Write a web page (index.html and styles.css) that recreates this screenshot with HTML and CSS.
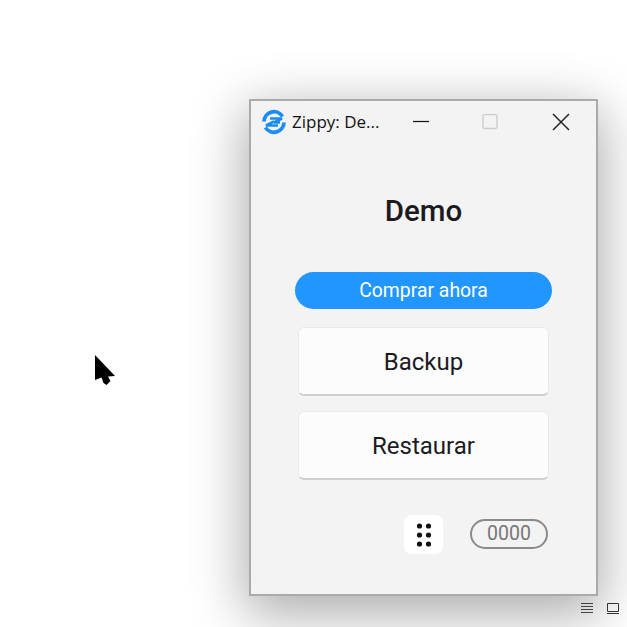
FILE: index.html
```html
<!DOCTYPE html>
<html lang="es">
<head>
<meta charset="utf-8">
<title>Zippy: Demo</title>
<link rel="stylesheet" href="styles.css">
</head>
<body>
<svg class="cursor" width="21" height="31" viewBox="0 0 21 31"><path d="M0 0L20 21L13 21.5L15.5 26L11.5 30L8.5 28L6.5 22.5L0 25Z" fill="#000"/></svg>
<main class="window">
  <header class="titlebar">
    <svg class="logo" width="26" height="26" viewBox="0 0 26 26">
      <path d="M3 12.5A10 10 0 0 1 21.5 7.5" fill="none" stroke="#1a8cf5" stroke-width="3.8"/>
      <path d="M23 13.5A10 10 0 0 1 4.5 18.5" fill="none" stroke="#1a8cf5" stroke-width="3.8"/>
      <path d="M9 9.5H21L13 13.5H19" fill="none" stroke="#1a8cf5" stroke-width="2.6"/>
      <path d="M17 16.5H5L13 12.5" fill="none" stroke="#1a8cf5" stroke-width="2.6"/>
    </svg>
    <span class="title">Zippy: De...</span>
    <div class="controls">
      <span class="ctl"><svg width="16" height="16" viewBox="0 0 16 16"><path d="M0 7.5H16" stroke="#111" stroke-width="1.2"/></svg></span>
      <span class="ctl ctl-max"><svg width="16" height="16" viewBox="0 0 16 16"><rect x="1" y="0.5" width="14" height="14" rx="2" fill="none" stroke="#cdcdcd" stroke-width="1.4"/></svg></span>
      <span class="ctl"><svg width="18" height="18" viewBox="0 0 18 18"><path d="M1 1L17 17M17 1L1 17" stroke="#222" stroke-width="1.5"/></svg></span>
    </div>
  </header>
  <section class="content">
    <h1 class="heading">Demo</h1>
    <button class="buy">Comprar ahora</button>
    <button class="action">Backup</button>
    <button class="action">Restaurar</button>
    <div class="footer">
      <span class="keypad">
        <svg width="16" height="26" viewBox="0 0 16 26" fill="#111"><circle cx="3.5" cy="4" r="2.6"/><circle cx="12.5" cy="4" r="2.6"/><circle cx="3.5" cy="13" r="2.6"/><circle cx="12.5" cy="13" r="2.6"/><circle cx="3.5" cy="22" r="2.6"/><circle cx="12.5" cy="22" r="2.6"/></svg>
      </span>
      <span class="code">0000</span>
    </div>
  </section>
</main>
<div class="tray">
  <svg width="14" height="12" viewBox="0 0 14 12"><path d="M1 1.5H13M1 4.5H13M1 7.5H13M1 10.5H13" stroke="#444" stroke-width="1"/></svg>
  <svg width="14" height="12" viewBox="0 0 14 12"><path d="M1.5 1.5H12.5V9.5H1.5Z" fill="none" stroke="#333" stroke-width="1"/><path d="M1 11.5H13" stroke="#333" stroke-width="1"/></svg>
</div>
</body>
</html>
```

FILE: styles.css
```css
* { box-sizing: border-box; }
html, body { margin: 0; height: 100%; }
body {
  position: relative;
  width: 627px;
  height: 627px;
  overflow: hidden;
  background: #fff;
  font-family: Roboto, sans-serif;
}
.cursor { position: absolute; left: 95px; top: 355px; }
.window {
  position: absolute;
  left: 249px;
  top: 99px;
  width: 349px;
  height: 497px;
  border: 2px solid #aaa;
  background: #f3f3f3;
  box-shadow: 0 14px 50px 4px rgba(0, 0, 0, 0.33);
  display: flex;
  flex-direction: column;
}
.titlebar {
  height: 41px;
  display: flex;
  align-items: center;
  padding-left: 10px;
  flex: none;
}
.logo { flex: none; }
.title {
  margin-left: 5px;
  margin-top: -1px;
  font-family: "Open Sans", sans-serif;
  font-size: 17px;
  color: #111;
  width: 100px;
  white-space: nowrap;
}
.controls {
  display: flex;
  margin-left: auto;
}
.ctl {
  width: 70px;
  display: flex;
  justify-content: center;
  align-items: center;
}
.ctl-max { padding-right: 2px; }
.content {
  flex: 1;
  display: flex;
  flex-direction: column;
  align-items: center;
  padding: 0 44px;
}
.heading {
  margin: 51px 0 43px;
  font-size: 29.5px;
  line-height: 36px;
  font-weight: 500;
  color: #1b1b1f;
}
.buy {
  width: 257px;
  height: 37px;
  flex: none;
  border: 0;
  border-radius: 19px;
  background: #2196ff;
  color: #fff;
  font: 400 19.4px Roboto, sans-serif;
  margin-bottom: 18px;
}
.action {
  width: 251px;
  height: 69px;
  flex: none;
  padding-top: 2px;
  border: 1px solid #e9e9e9;
  border-bottom: 2px solid #cfcfcf;
  border-radius: 6px;
  background: #fcfcfc;
  color: #1b1b1f;
  font: 400 24px Roboto, sans-serif;
  margin-bottom: 15px;
}
.footer {
  align-self: stretch;
  display: flex;
  align-items: center;
  margin-top: 20px;
  padding-left: 109px;
}
.keypad {
  width: 39px;
  height: 39px;
  background: #fff;
  border-radius: 7px;
  display: flex;
  align-items: center;
  justify-content: center;
}
.code {
  width: 78px;
  height: 30px;
  margin-left: 27px;
  margin-top: -1px;
  border: 2px solid #8a8a8a;
  border-radius: 15px;
  color: #777;
  font-size: 19.5px;
  line-height: 26px;
  text-align: center;
}
.tray {
  position: absolute;
  left: 580px;
  top: 602px;
  display: flex;
  gap: 12px;
}
```
